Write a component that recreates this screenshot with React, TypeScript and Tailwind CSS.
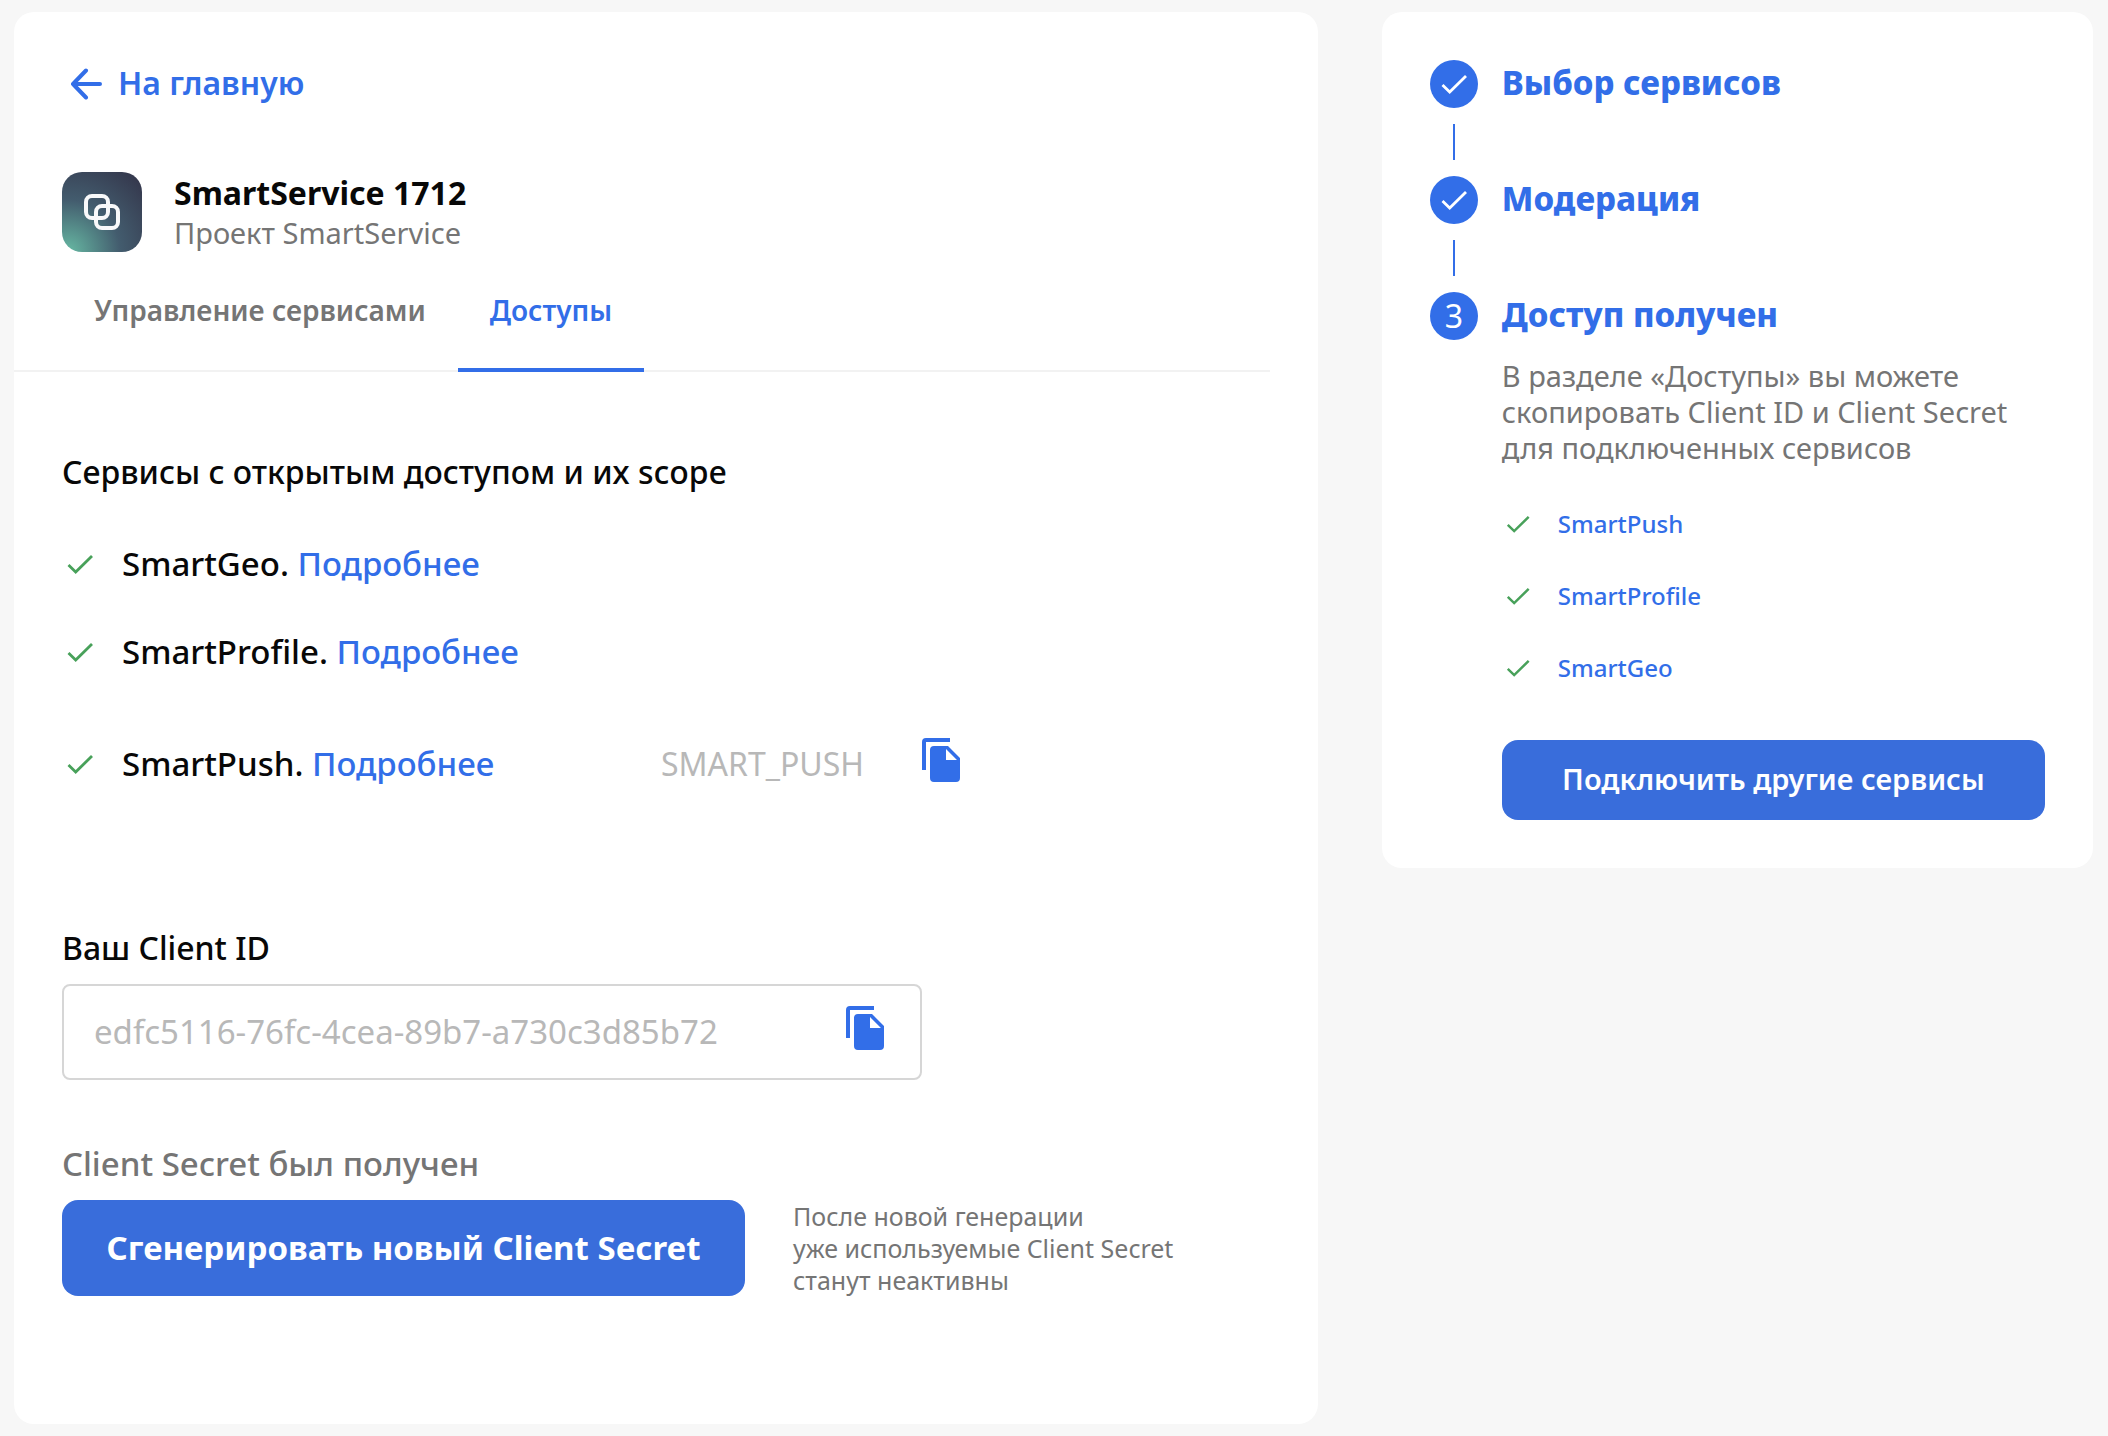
import React, { useState } from "react";

interface Service {
  name: string;
  scope?: string;
}

const openServices: Service[] = [
  { name: "SmartGeo" },
  { name: "SmartProfile" },
  { name: "SmartPush", scope: "SMART_PUSH" },
];

const connectedServices = ["SmartPush", "SmartProfile", "SmartGeo"];

const tabs = ["Управление сервисами", "Доступы"];

const CLIENT_ID = "edfc5116-76fc-4cea-89b7-a730c3d85b72";

const BackIcon: React.FC = () => (
  <svg width="32" height="32" viewBox="0 0 32 32" fill="none" stroke="currentColor" strokeWidth="4" strokeLinecap="round" strokeLinejoin="round">
    <path d="M16 2.5 3 16l13 13.5M3 16h27" />
  </svg>
);

const CheckIcon: React.FC<{ className?: string }> = ({ className }) => (
  <svg className={className} viewBox="0 0 36 36" fill="none" stroke="currentColor" strokeWidth="2.8">
    <path d="M6.5 19l7.2 7L30 10" />
  </svg>
);

const CopyIcon: React.FC = () => (
  <svg width="38" height="44" viewBox="0 0 38 44" fill="currentColor">
    <path d="M28 0H4a4 4 0 0 0-4 4v28h4V4h24z" />
    <path fillRule="evenodd" d="M12 8h14l12 12v20a4 4 0 0 1-4 4H12a4 4 0 0 1-4-4V12a4 4 0 0 1 4-4zM24 11v11h11z" />
  </svg>
);

const ProjectLogo: React.FC = () => (
  <svg className="size-20 shrink-0" viewBox="0 0 80 80" fill="none">
    <defs>
      <radialGradient id="logoBg" cx="0" cy="0" r="1" gradientUnits="userSpaceOnUse" gradientTransform="translate(6 80) rotate(-48) scale(104)">
        <stop stopColor="#67b9a3" />
        <stop offset="0.5" stopColor="#435c6e" />
        <stop offset="1" stopColor="#34364b" />
      </radialGradient>
    </defs>
    <rect width="80" height="80" rx="20" fill="url(#logoBg)" />
    <rect x="24" y="24" width="22" height="22" rx="6" stroke="#f8f9fa" strokeWidth="4" />
    <rect x="34" y="34" width="22" height="22" rx="6" stroke="#f8f9fa" strokeWidth="4" />
  </svg>
);

// Вертикальная линия между шагами
const StepLine: React.FC = () => <div className="my-4 ml-[23px] h-9 w-0.5 bg-[#326ee8]" />;

const Step: React.FC<{ title: string; number?: number }> = ({ title, number }) => (
  <div className="flex items-center gap-6">
    <span className="flex size-12 shrink-0 items-center justify-center rounded-full bg-[#326ee8] text-[32px] leading-[46px] text-white">
      {number ?? <CheckIcon className="size-9" />}
    </span>
    <h2 className="pb-0.5 text-[33px] leading-[46px] font-extrabold text-[#326ee8]">{title}</h2>
  </div>
);

const AccessCard: React.FC = () => {
  const [activeTab, setActiveTab] = useState(tabs[1]);

  return (
    <main className="rounded-[20px] bg-white pt-12 pb-32">
      <a href="#" className="ml-14 inline-flex h-12 items-center gap-4 text-[32px] leading-[46px] font-semibold text-[#326ee8]">
        <BackIcon />
        <span className="pb-0.5">На главную</span>
      </a>

      <div className="mt-16 ml-12 flex items-center gap-8">
        <ProjectLogo />
        <div>
          <h1 className="text-[32px] leading-[42px] font-bold">SmartService 1712</h1>
          <p className="text-[29px] leading-[38px] text-[#757575]">Проект SmartService</p>
        </div>
      </div>

      <nav className="mt-8 mr-12 flex border-b-2 border-[#f2f2f2] pl-12">
        {tabs.map((tab) => (
          <button
            key={tab}
            type="button"
            onClick={() => setActiveTab(tab)}
            className={
              tab === activeTab
                ? "-mb-0.5 border-b-4 border-[#326ee8] px-8 pt-1.5 pb-[38px] text-[28px] leading-10 font-semibold text-[#326ee8]"
                : "-mb-0.5 border-b-4 border-transparent px-8 pt-1.5 pb-[38px] text-[28px] leading-10 font-semibold text-[#757575]"
            }>
            {tab}
          </button>
        ))}
      </nav>

      <section className="mt-20 px-12">
        <h2 className="text-[32px] leading-10 font-medium">Сервисы с открытым доступом и их scope</h2>
        <ul className="mt-7">
          {openServices.map((service) => (
            <li
              key={service.name}
              className={service.scope ? "flex h-[136px] items-center text-[32px]" : "flex h-[88px] items-center text-[32px]"}>
              <CheckIcon className="size-9 text-[#48a15a]" />
              <p className="ml-6 w-[539px] text-[33px] font-medium">
                {service.name}.{" "}
                <a href="#" className="text-[#326ee8]">
                  Подробнее
                </a>
              </p>
              {service.scope && (
                <>
                  <span className="w-[261px] text-[#b8b8b8]">{service.scope}</span>
                  <button type="button" aria-label="Скопировать scope" className="pb-2 text-[#326ee8]">
                    <CopyIcon />
                  </button>
                </>
              )}
            </li>
          ))}
        </ul>
      </section>

      <section className="mt-24 px-12">
        <label htmlFor="clientId" className="block text-[32px] leading-10 font-medium">
          Ваш Client ID
        </label>
        <div className="mt-4 flex h-24 max-w-[860px] items-center rounded-lg border-2 border-[#d6d6d6] pr-9 pl-[30px]">
          <input id="clientId" readOnly value={CLIENT_ID} className="min-w-0 flex-1 text-[33px] text-[#b8b8b8] outline-none" />
          <button type="button" aria-label="Скопировать Client ID" className="pb-2 text-[#326ee8]">
            <CopyIcon />
          </button>
        </div>

        <p className="mt-16 text-[33px] leading-10 font-medium text-[#757575]">Client Secret был получен</p>
        <div className="mt-4 flex items-center gap-12">
          <button type="button" className="h-24 w-[683px] rounded-2xl bg-[#396ddb] text-[33px] font-bold text-white">
            Сгенерировать новый Client Secret
          </button>
          <p className="text-[25px] leading-8 text-[#757575]">
            После новой генерации
            <br />
            уже используемые Client Secret
            <br />
            станут неактивны
          </p>
        </div>
      </section>
    </main>
  );
};

const StepsCard: React.FC = () => (
  <aside className="self-start rounded-[20px] bg-white p-12">
    <Step title="Выбор сервисов" />
    <StepLine />
    <Step title="Модерация" />
    <StepLine />
    <Step title="Доступ получен" number={3} />
    <div className="mt-[18px] pl-[72px]">
      <p className="text-[29px] leading-9 text-[#757575]">
        В разделе «Доступы» вы можете
        <br />
        скопировать Client ID и Client Secret
        <br />
        для подключенных сервисов
      </p>
      <ul className="mt-[22px]">
        {connectedServices.map((name) => (
          <li key={name} className="flex h-[72px] items-center gap-6 text-[24px] font-medium">
            <CheckIcon className="size-8 text-[#48a15a]" />
            <a href="#" className="text-[#326ee8]">
              {name}
            </a>
          </li>
        ))}
      </ul>
      <button type="button" className="mt-9 h-20 w-full rounded-2xl bg-[#396ddb] pb-0.5 text-[29px] font-semibold text-white">
        Подключить другие сервисы
      </button>
    </div>
  </aside>
);

export default function App() {
  return (
    <div className="grid min-h-screen grid-cols-[11fr_6fr] gap-16 bg-[#f7f7f7] py-3 pr-[15px] pl-3.5 font-['Noto_Sans',sans-serif] text-[#080808]">
      <AccessCard />
      <StepsCard />
    </div>
  );
}
